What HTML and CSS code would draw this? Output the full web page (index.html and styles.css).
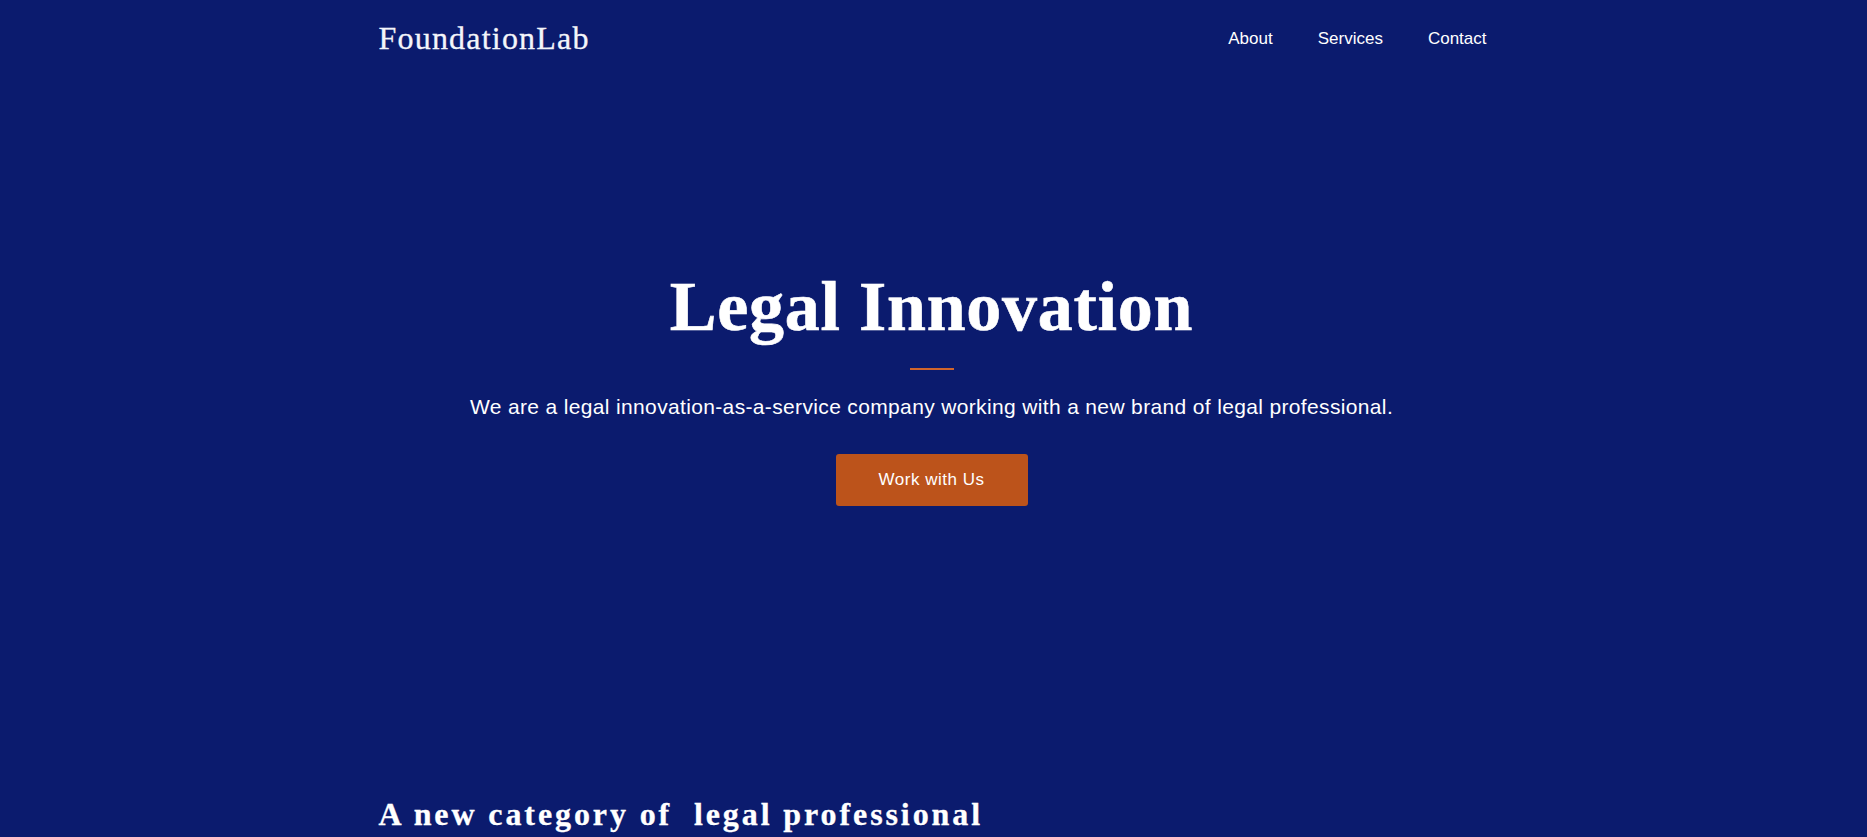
FILE: index.html
```html
<!DOCTYPE html>
<html lang="en">
<head>
<meta charset="utf-8">
<title>FoundationLab</title>
<link rel="stylesheet" href="styles.css">
</head>
<body>
<header class="site-header">
  <div class="container header-inner">
    <a class="logo" href="#">FoundationLab</a>
    <nav class="nav">
      <a href="#">About</a>
      <a href="#">Services</a>
      <a href="#">Contact</a>
    </nav>
  </div>
</header>
<section class="hero">
  <div class="container hero-inner">
    <h1 class="hero-title">Legal Innovation</h1>
    <span class="hero-rule"></span>
    <p class="hero-text">We are a legal innovation-as-a-service company working with a new brand of legal professional.</p>
    <a class="btn" href="#">Work with Us</a>
  </div>
</section>
<section class="category">
  <div class="container">
    <h2 class="category-title">A new category of&nbsp; legal professional</h2>
  </div>
</section>
</body>
</html>
```

FILE: styles.css
```css
* { box-sizing: border-box; }
html, body { margin: 0; padding: 0; }
body {
  background: #0b1b6e;
  color: #ffffff;
  font-family: "Liberation Sans", Arial, sans-serif;
  overflow: hidden;
  height: 837px;
}
a { color: inherit; text-decoration: none; }
.container {
  max-width: 1140px;
  margin: 0 auto;
  padding: 0 15px;
}
.header-inner {
  height: 76px;
  display: flex;
  align-items: center;
  justify-content: space-between;
}
.logo {
  font-family: "Liberation Serif", "Times New Roman", serif;
  font-size: 32px;
  line-height: 32px;
  letter-spacing: 1.2px;
  color: #f4f5fa;
  -webkit-text-stroke: 0.3px #f4f5fa;
}
.nav {
  display: flex;
  gap: 45px;
  padding-right: 2px;
}
.nav a {
  font-size: 17px;
  line-height: 20px;
  margin-top: 2px;
}
.hero-inner {
  padding-top: 196px;
  padding-right: 19px;
  padding-bottom: 290px;
  display: flex;
  flex-direction: column;
  align-items: center;
  text-align: center;
}
.hero-title {
  margin: 0;
  font-family: "Liberation Serif", "Times New Roman", serif;
  font-weight: 700;
  font-size: 70px;
  line-height: 70px;
  letter-spacing: 0.75px;
  -webkit-text-stroke: 0.6px #ffffff;
}
.hero-rule {
  display: block;
  width: 44px;
  height: 2px;
  background: #d0652c;
  margin-top: 26px;
}
.hero-text {
  margin: 21px 0 0;
  font-size: 21px;
  line-height: 31.5px;
  letter-spacing: 0.35px;
}
.btn {
  margin-top: 31px;
  display: block;
  width: 192px;
  padding: 16px 0;
  font-size: 17px;
  line-height: 20px;
  letter-spacing: 0.5px;
  background: #bc531b;
  border-radius: 3px;
  text-align: center;
}
.category-title {
  margin: 0;
  font-family: "Liberation Serif", "Times New Roman", serif;
  font-weight: 700;
  font-size: 32px;
  line-height: 36px;
  letter-spacing: 2.9px;
  -webkit-text-stroke: 0.3px #ffffff;
}
```
